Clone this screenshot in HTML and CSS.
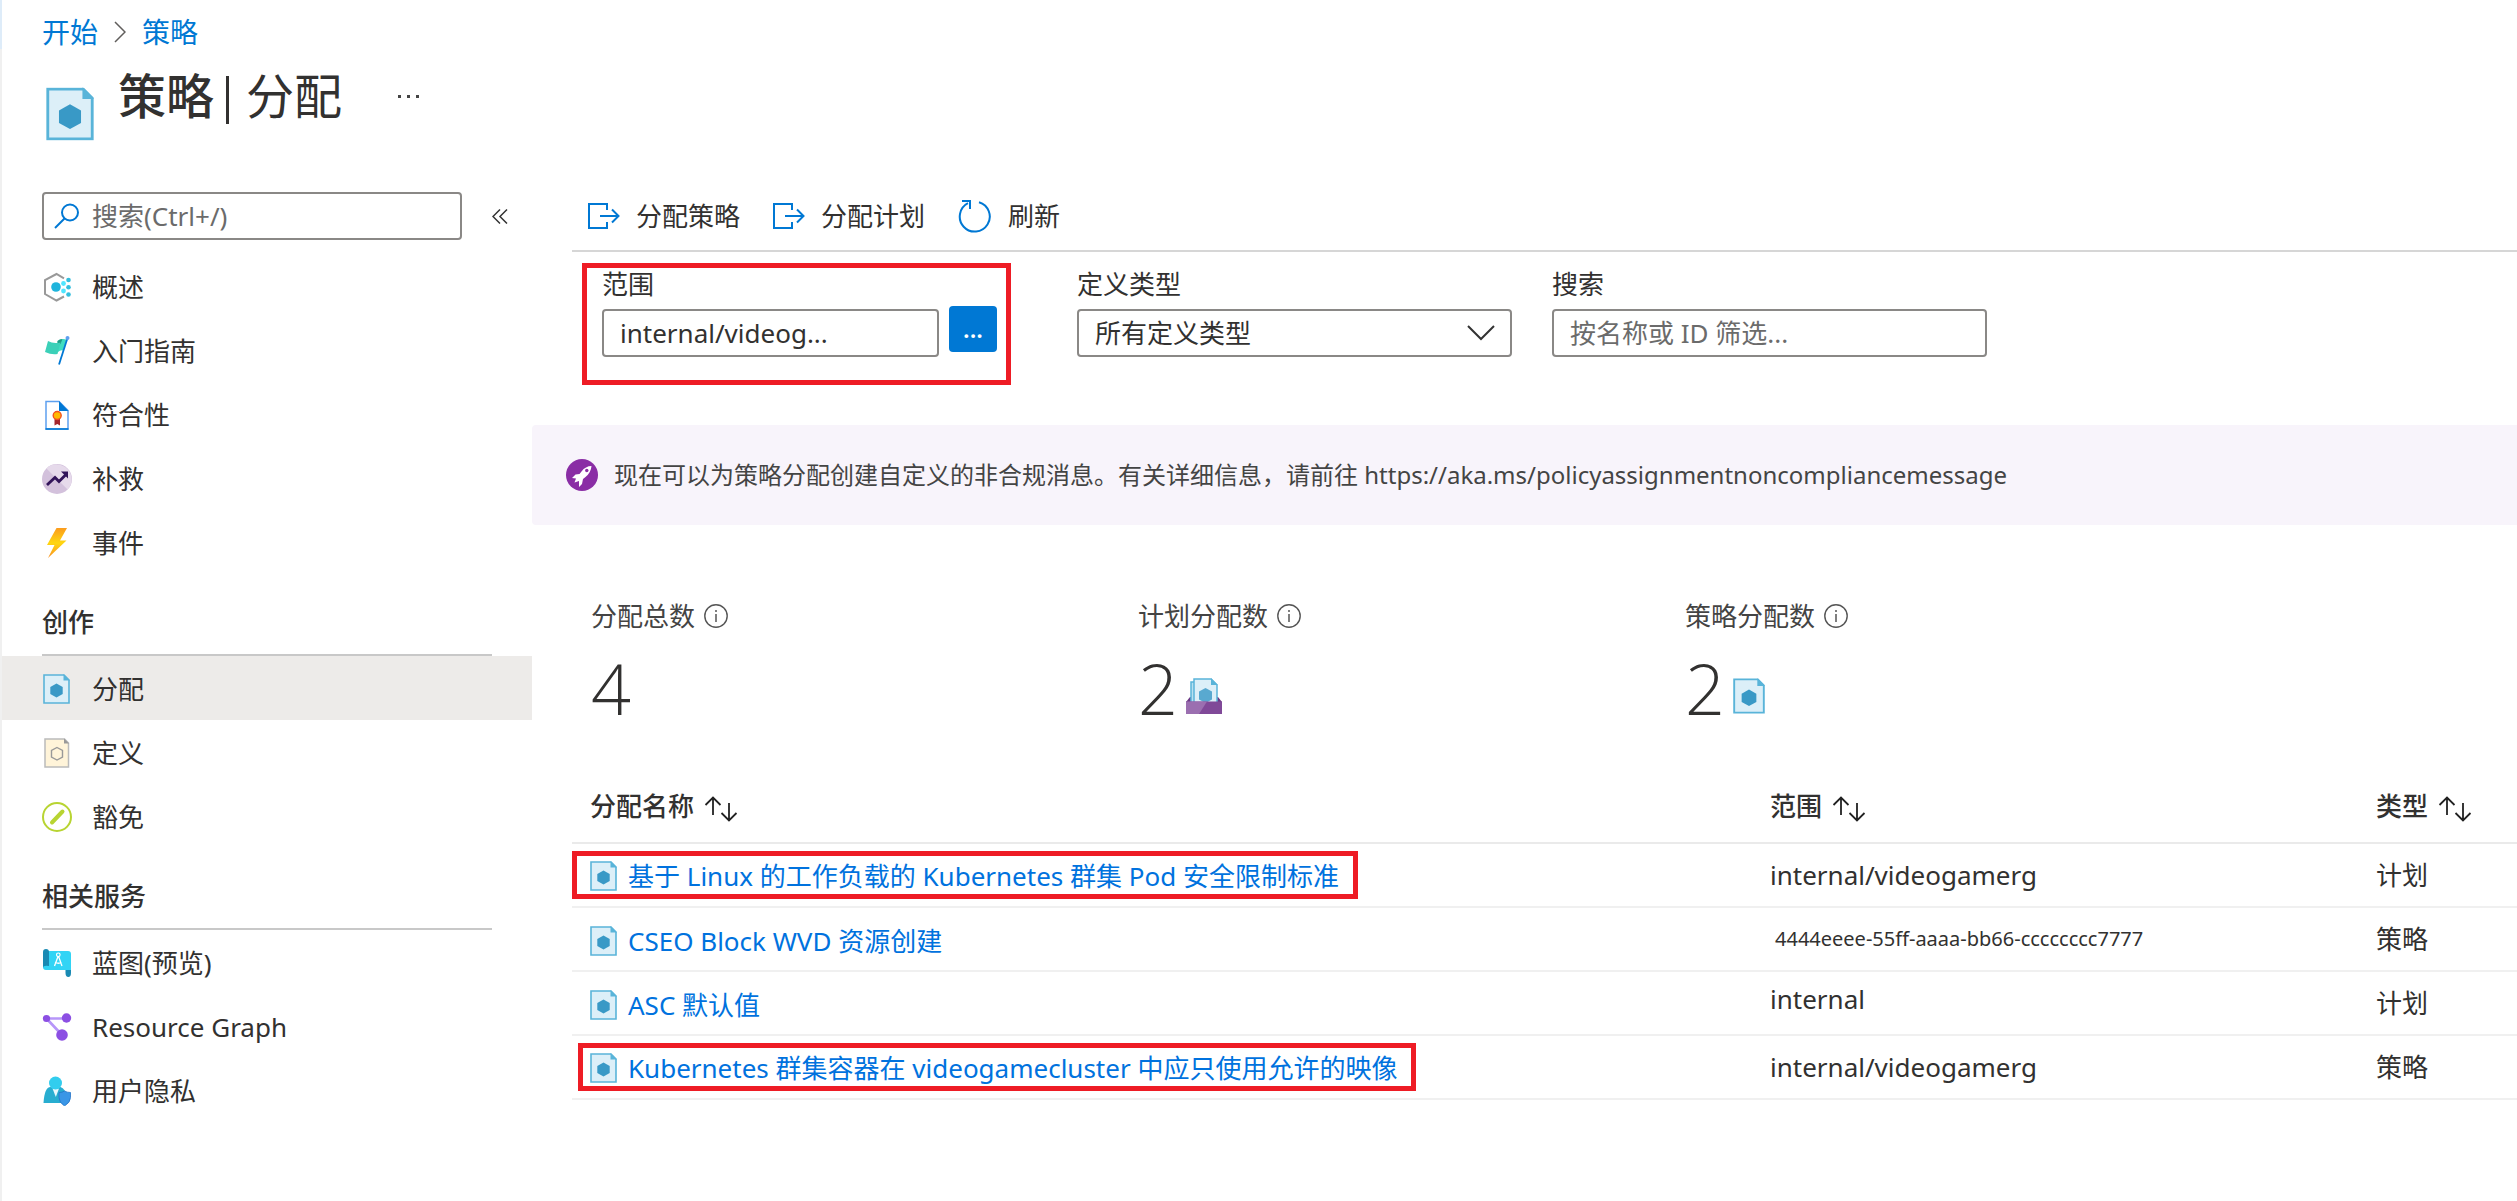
FILE: index.html
```html
<!DOCTYPE html>
<html lang="zh-CN">
<head>
<meta charset="utf-8">
<title>策略 | 分配</title>
<link rel="stylesheet" href="styles.css">
</head>
<body>
<svg class="sprite" aria-hidden="true">
  <symbol id="i-policy" viewBox="0 0 27 30">
    <path d="M1 1h20l5 5v23H1z" fill="#dceff8" stroke="#59b4d9" stroke-width="1.6"/>
    <path d="M20.500 0 27 6.500h-6.500z" fill="#59b4d9"/>
    <path d="M13.500 9.500l6.200 3.500v7l-6.200 3.500-6.200-3.500v-7z" fill="#3999c6"/>
  </symbol>
  <symbol id="i-assign" viewBox="0 0 32 28">
    <path d="M19 8V2H1v24h18v-6M12 14h18M24 7.500l6.500 6.500-6.500 6.500" fill="none" stroke="#0078d4" stroke-width="2"/>
  </symbol>
  <symbol id="i-info" viewBox="0 0 24 24">
    <circle cx="12" cy="12" r="11.200" fill="none" stroke="#555" stroke-width="1.400"/>
    <path d="M12 10v8M12 6v2" stroke="#555" stroke-width="1.500"/>
  </symbol>
  <symbol id="i-sort" viewBox="0 0 34 26">
    <path d="M9 19V1M1.500 9 9 1.500 16.500 9M25 7v17M17.500 17l7.500 7.500 7.500-7.500" fill="none" stroke="#222" stroke-width="1.800"/>
  </symbol>
</svg>

<div class="page">
  <header class="top">
    <nav class="crumbs" aria-label="导航路径">
      <a href="#">开始</a>
      <svg width="12" height="22" viewBox="0 0 12 22"><path d="M1 1l10 10L1 21" fill="none" stroke="#605e5c" stroke-width="1.500"/></svg>
      <a href="#">策略</a>
    </nav>
    <div class="title-row">
      <svg class="title-icon" viewBox="0 0 27 30"><use href="#i-policy"/></svg>
      <h1><b>策略</b><i class="bar"></i>分配</h1>
      <button class="more" aria-label="更多"><svg width="24" height="6" viewBox="0 0 24 6"><path d="M1 2h3v3H1zM10 2h3v3h-3zM19 2h3v3h-3z" fill="#444"/></svg></button>
    </div>
  </header>

  <div class="body">
    <aside class="side">
      <div class="side-search">
        <label class="search-box">
          <svg width="26" height="26" viewBox="0 0 26 26"><circle cx="16" cy="9.500" r="8" fill="none" stroke="#0078d4" stroke-width="2"/><path d="M10.500 15.500 1 25" stroke="#0078d4" stroke-width="2"/></svg>
          <input type="text" placeholder="搜索(Ctrl+/)" aria-label="搜索菜单">
        </label>
        <button class="collapse" aria-label="折叠"><svg width="16" height="15" viewBox="0 0 16 15"><path d="M8 .5l-7 7 7 7M15 .5l-7 7 7 7" fill="none" stroke="#333" stroke-width="1.500"/></svg></button>
      </div>
      <nav class="menu">
        <a href="#"><svg viewBox="0 0 30 30"><path d="M22 6.300 14.500 2 3 8v14l11.500 6.500L22 24.500" fill="none" stroke="#999" stroke-width="2"/><circle cx="14" cy="15" r="4.800" fill="#1fb4dc"/><g fill="#50e6ff"><circle cx="21.500" cy="11.500" r="2.400"/><circle cx="21.500" cy="19" r="2.400"/></g><g fill="#32bedd"><circle cx="26.500" cy="8" r="2.300"/><circle cx="26.500" cy="15.200" r="2.300"/><circle cx="26.500" cy="22.500" r="2.300"/></g></svg>概述</a>
        <a href="#"><svg viewBox="0 0 30 30"><path d="M15.500 5q4-3 9-1.500l-3 11q-3-1-5.500 1.500z" fill="#3fdcc0"/><path d="M15.500 5q2-2 5-2l-2 5q-1.500 0-3 1.500z" fill="#1f9c86"/><path d="M6 5q5 3 12.500 1.500l-3 11.500q-6 1-12.500-2z" fill="#3bd0b8"/><path d="M25.500 2 17 28.500" stroke="#0078d4" stroke-width="1.800"/><circle cx="25.500" cy="2" r="2" fill="#5ea0ef"/></svg>入门指南</a>
        <a href="#"><svg viewBox="0 0 30 30"><path d="M4 1.500h13l9 9V29H4z" fill="#fff" stroke="#5ea0ef" stroke-width="1.500"/><path d="M17 1v10h9.500z" fill="#0078d4"/><path d="M3.500 29h23" stroke="#0078d4" stroke-width="1.600"/><path d="M12.500 18h5.500v7.500l-2.700-1.500-2.800 1.500z" fill="#a4262c"/><circle cx="15.200" cy="15.500" r="4" fill="#ffb900" stroke="#f25022" stroke-width="1.400"/></svg>符合性</a>
        <a href="#"><svg viewBox="0 0 30 30"><circle cx="15" cy="15" r="15" fill="#d3c1dc"/><path d="M4.400 4.400A15 15 0 0 1 25.600 25.600z" fill="#e6daeb"/><path d="M5 21l8-7.500 4 4 7-7" fill="none" stroke="#32145a" stroke-width="2.800"/><path d="M19 7.500h7v7z" fill="#32145a"/></svg>补救</a>
        <a href="#"><svg viewBox="0 0 30 30"><defs><linearGradient id="gb" x2="0" y2="1"><stop offset="0" stop-color="#fb9b1e"/><stop offset=".5" stop-color="#ffd70f"/><stop offset="1" stop-color="#f99024"/></linearGradient></defs><path d="M14.500 0H25l-7 12.500h6.500L6 30l6.500-13H5z" fill="url(#gb)"/></svg>事件</a>
        <h2>创作</h2>
        <a href="#" class="on" aria-current="page"><svg viewBox="0 0 30 30"><use href="#i-policy" width="27" height="30" x="1"/></svg>分配</a>
        <a href="#"><svg viewBox="0 0 30 30"><path d="M3 1h19.500l4 4v24H3z" fill="#fff4d9" stroke="#bbb" stroke-width="1.500"/><path d="M22 .5l5 5h-5z" fill="#999"/><path d="M15 9.500l5.500 3v6.500L15 22l-5.500-3v-6.500z" fill="none" stroke="#999" stroke-width="1.400"/></svg>定义</a>
        <a href="#"><svg viewBox="0 0 30 30"><circle cx="15" cy="15" r="14" fill="none" stroke="#b8d432" stroke-width="2"/><path d="M10 20.500 20.500 9.500" stroke="#b8d432" stroke-width="4" stroke-linecap="round"/></svg>豁免</a>
        <h2>相关服务</h2>
        <a href="#"><svg viewBox="0 0 30 30"><path d="M5 3h21q3 0 3 3v19q0-3-3-3H4q-3 0-3-3V5z" fill="#32d4f5"/><path d="M1 4q0-3 3-3t3 3v14q-6-1-6 2z" fill="#198ab3"/><path d="M23.500 22H29v3q0 4-2.700 4t-2.800-4z" fill="#198ab3"/><circle cx="16.300" cy="6.800" r="1.800" fill="none" stroke="#fff" stroke-width="1.200"/><path d="M16 8.500 12.500 18M16.600 8.500 20 18M13 14.500q3.500 1.500 6.500 0" fill="none" stroke="#fff" stroke-width="1.300"/></svg>蓝图(预览)</a>
        <a href="#"><svg viewBox="0 0 30 30"><path d="M4.500 6.500H24M4.500 6.500 20 23" stroke="#b796f9" stroke-width="2.600"/><g fill="#8c4fe3"><circle cx="4.500" cy="6.500" r="3.600"/><circle cx="24.500" cy="6" r="4.700"/><circle cx="20" cy="23" r="5.800"/></g></svg>Resource Graph</a>
        <a href="#"><svg viewBox="0 0 30 30"><path d="M1.500 27q1-16 7-16h10q5 2 6 9v7z" fill="#28add0"/><path d="M10.500 12.500h6.500L13.800 21z" fill="#e8f8fd"/><circle cx="13.500" cy="7" r="6.500" fill="#32cdee"/><path d="M17 16.500q3.500 0 5.500-1.500 2.500 1.500 6 1.500v5q0 5-6 8.500-5.500-3.500-5.500-8.500z" fill="#3a96e6" stroke="#2474c8" stroke-width=".8"/></svg>用户隐私</a>
      </nav>
    </aside>

    <main class="main">
      <div class="toolbar">
        <button><svg width="32" height="28"><use href="#i-assign"/></svg>分配策略</button>
        <button><svg width="32" height="28"><use href="#i-assign"/></svg>分配计划</button>
        <button><svg width="34" height="34" viewBox="0 0 34 34"><path d="M21 3.200A15 15 0 1 1 10 4.200M4 2h8v8" fill="none" stroke="#0078d4" stroke-width="2"/></svg>刷新</button>
      </div>

      <div class="filters">
        <div class="field marked-scope">
          <label for="scope">范围</label>
          <div class="scope-row"><input id="scope" type="text" value="internal/videog..."><button class="browse" aria-label="选择范围">...</button></div>
        </div>
        <div class="field">
          <label for="type">定义类型</label>
          <div class="select-wrap"><select id="type"><option>所有定义类型</option></select><svg width="28" height="16" viewBox="0 0 28 16"><path d="M1 1l13 13L27 1" fill="none" stroke="#333" stroke-width="2"/></svg></div>
        </div>
        <div class="field">
          <label for="q">搜索</label>
          <input id="q" type="text" placeholder="按名称或 ID 筛选...">
        </div>
      </div>

      <div class="banner">
        <svg width="32" height="32" viewBox="0 0 32 32"><circle cx="16" cy="16" r="16" fill="#8a2da5"/><path d="M25.500 7q-6 0-10 5.500l-2 2.500-4 .5L6 19l4 .5-1.500 4L13 22l0 6 3-3 1-5 2.500-2Q25 13.500 25.500 7z" fill="#fff"/><circle cx="20.800" cy="11.500" r="1.700" fill="#8a2da5"/></svg>
        <p>现在可以为策略分配创建自定义的非合规消息。有关详细信息，请前往 https://aka.ms/policyassignmentnoncompliancemessage</p>
      </div>

      <div class="stats">
        <div class="stat"><div class="stat-label">分配总数<svg width="24" height="24"><use href="#i-info"/></svg></div><div class="stat-value">4</div></div>
        <div class="stat"><div class="stat-label">计划分配数<svg width="24" height="24"><use href="#i-info"/></svg></div><div class="stat-value">2<svg width="36" height="36" viewBox="0 0 36 36"><path d="M0 24l4-5h28l4 5z" fill="#6b3a86"/><path d="M5 4h20v22H5z" fill="#b8e0f0" stroke="#59b4d9" stroke-width="1.500"/><path d="M8 1h17l6 6v19H8z" fill="#dceff8" stroke="#59b4d9" stroke-width="1.500"/><path d="M25 0l7 7h-7z" fill="#59b4d9"/><path d="M19.500 10l6.500 3.500v8L19.500 25 13 21.500v-8z" fill="#59a9d0"/><path d="M0 23.500h36V36H0z" fill="#804998"/><path d="M0 23.500h21L13 36H0z" fill="#9b6fb0"/></svg></div></div>
        <div class="stat"><div class="stat-label">策略分配数<svg width="24" height="24"><use href="#i-info"/></svg></div><div class="stat-value">2<svg class="doc" width="32" height="36"><use href="#i-policy"/></svg></div></div>
      </div>

      <table>
        <colgroup><col class="c-name"><col class="c-scope"><col></colgroup>
        <thead><tr>
          <th scope="col">分配名称<svg width="34" height="26"><use href="#i-sort"/></svg></th>
          <th scope="col">范围<svg width="34" height="26"><use href="#i-sort"/></svg></th>
          <th scope="col">类型<svg width="34" height="26"><use href="#i-sort"/></svg></th>
        </tr></thead>
        <tbody>
          <tr><td><a href="#" class="marked"><svg width="27" height="30"><use href="#i-policy"/></svg>基于 Linux 的工作负载的 Kubernetes 群集 Pod 安全限制标准</a></td><td>internal/videogamerg</td><td>计划</td></tr>
          <tr><td><a href="#"><svg width="27" height="30"><use href="#i-policy"/></svg>CSEO Block WVD 资源创建</a></td><td class="id">4444eeee-55ff-aaaa-bb66-cccccccc7777</td><td>策略</td></tr>
          <tr><td><a href="#"><svg width="27" height="30"><use href="#i-policy"/></svg>ASC 默认值</a></td><td class="raised">internal</td><td>计划</td></tr>
          <tr><td><a href="#" class="marked inset"><svg width="27" height="30"><use href="#i-policy"/></svg>Kubernetes 群集容器在 videogamecluster 中应只使用允许的映像</a></td><td>internal/videogamerg</td><td>策略</td></tr>
        </tbody>
      </table>
    </main>
  </div>
</div>
</body>
</html>
```
FILE: styles.css
```css
* { box-sizing: border-box; }

body {
  margin: 0;
  background: #fff;
  color: #323130;
  font: 26px/36px "Noto Sans", "Noto Sans CJK SC", sans-serif;
}

.sprite { position: absolute; width: 0; height: 0; }
svg { display: block; flex: none; }
a { color: #0078d4; text-decoration: none; }
button { border: 0; padding: 0; background: none; font: inherit; color: inherit; }
input, select { font: inherit; color: inherit; }
::placeholder { color: #6b6b6b; opacity: 1; }

.page {
  min-height: 100vh;
  border-left: 2px solid;
  border-image: linear-gradient(#deecf9 50px, #f0f0f0 50px) 1;
}

/* header */
.top { padding: 12px 40px 0; }
.crumbs { display: flex; align-items: center; gap: 16px; height: 40px; font-size: 28px; }
.title-row { display: flex; align-items: flex-start; height: 132px; padding: 8px 0 0 4px; }
.title-icon { width: 48px; height: 54px; margin-top: 27px; }
h1 { display: flex; align-items: center; margin: 0 0 0 24px; height: 72px; font-size: 48px; font-weight: 400; }
h1 b { font-weight: 500; }
h1 .bar { width: 3px; height: 48px; margin: 8px 17px 0 12px; background: #323130; }
.more { height: 72px; margin-left: 55px; }

/* layout */
.body { display: flex; align-items: flex-start; }
.side { width: 530px; flex: none; padding-top: 8px; }
.main { flex: 1; min-width: 0; padding-top: 8px; }

/* side menu */
.side-search { display: flex; align-items: center; gap: 30px; padding-left: 40px; }
.search-box { display: flex; align-items: center; gap: 12px; width: 420px; height: 48px; padding: 0 10px; border: 2px solid #8a8886; border-radius: 4px; }
.search-box input { flex: 1; min-width: 0; border: 0; padding: 0; outline: 0; background: none; }
.menu { padding-top: 14px; }
.menu a { display: flex; align-items: center; gap: 20px; height: 64px; padding: 2px 0 0 40px; color: inherit; }
.menu a svg { width: 30px; height: 30px; }
.menu .on { background: #edebe9; }
.menu h2 { height: 82px; margin: 0 40px; padding-top: 30px; border-bottom: 2px solid #c8c8c8; font-size: 26px; font-weight: 500; }

/* toolbar */
.toolbar { display: flex; gap: 33px; height: 60px; margin-left: 40px; padding-left: 16px; border-bottom: 2px solid #d6d6d6; }
.toolbar button { display: flex; align-items: center; gap: 16px; height: 48px; }

/* filters */
.filters { display: grid; grid-template-columns: repeat(3, 435px); gap: 40px; padding: 10px 0 0 70px; height: 173px; }
.field { display: flex; flex-direction: column; gap: 10px; }
.field label { height: 37px; line-height: 44px; }
.field input, .field select { width: 100%; height: 48px; padding: 0 16px; border: 2px solid #8a8886; border-radius: 4px; background: #fff; appearance: none; }
.marked-scope { width: 429px; height: 122px; margin: 1px 0 0 -20px; padding: 0 9px 0 15px; border: 5px solid #ee1c25; }
.marked-scope label { margin-top: -6px; }
.scope-row { display: flex; gap: 10px; }
.scope-row input { flex: 1; min-width: 0; }
.browse { width: 48px; height: 46px; margin-top: -3px; border-radius: 4px; background: #0078d4; color: #fff; font-size: 24px; font-weight: 600; }
.select-wrap { display: grid; align-items: center; }
.select-wrap > * { grid-area: 1 / 1; }
.select-wrap svg { justify-self: end; margin-right: 17px; pointer-events: none; }

/* banner */
.banner { display: flex; align-items: center; gap: 16px; height: 100px; padding-left: 34px; border-radius: 4px 0 0 4px; background: #f8f4fb; color: #444; }
.banner p { margin: 0; font-size: 24px; }

/* stats */
.stats { display: grid; grid-template-columns: repeat(3, 547px); padding: 73px 0 0 59px; }
.stat-label { display: flex; align-items: center; gap: 9px; color: #444; }
.stat-value { display: flex; align-items: flex-end; gap: 8px; margin-top: 14px; font: 350 70px/80px "Open Sans", sans-serif; }
.stat-value svg { margin-bottom: 14px; }

/* table */
table { width: calc(100% - 40px); margin: 42px 0 0 40px; border-collapse: collapse; table-layout: fixed; }
.c-name { width: 1180px; }
.c-scope { width: 606px; }
th { height: 73px; padding: 0 18px; text-align: left; font-weight: 500; border-bottom: 2px solid #eaeaea; }
th svg { display: inline-block; margin-left: 10px; vertical-align: middle; }
td { height: 64px; padding: 0 18px; border-bottom: 2px solid #f0f0f0; }
td a { display: inline-flex; align-items: center; gap: 11px; height: 48px; padding-top: 3px; color: #0072de; vertical-align: middle; }
td .marked { margin-left: -18px; padding: 2px 14px 0 13px; border: 5px solid #ee1c25; }
td .inset { margin-left: -12px; padding-left: 7px; }
td.id { font-size: 20px; padding-left: 23px; }
td.raised { padding-bottom: 8px; }
```
